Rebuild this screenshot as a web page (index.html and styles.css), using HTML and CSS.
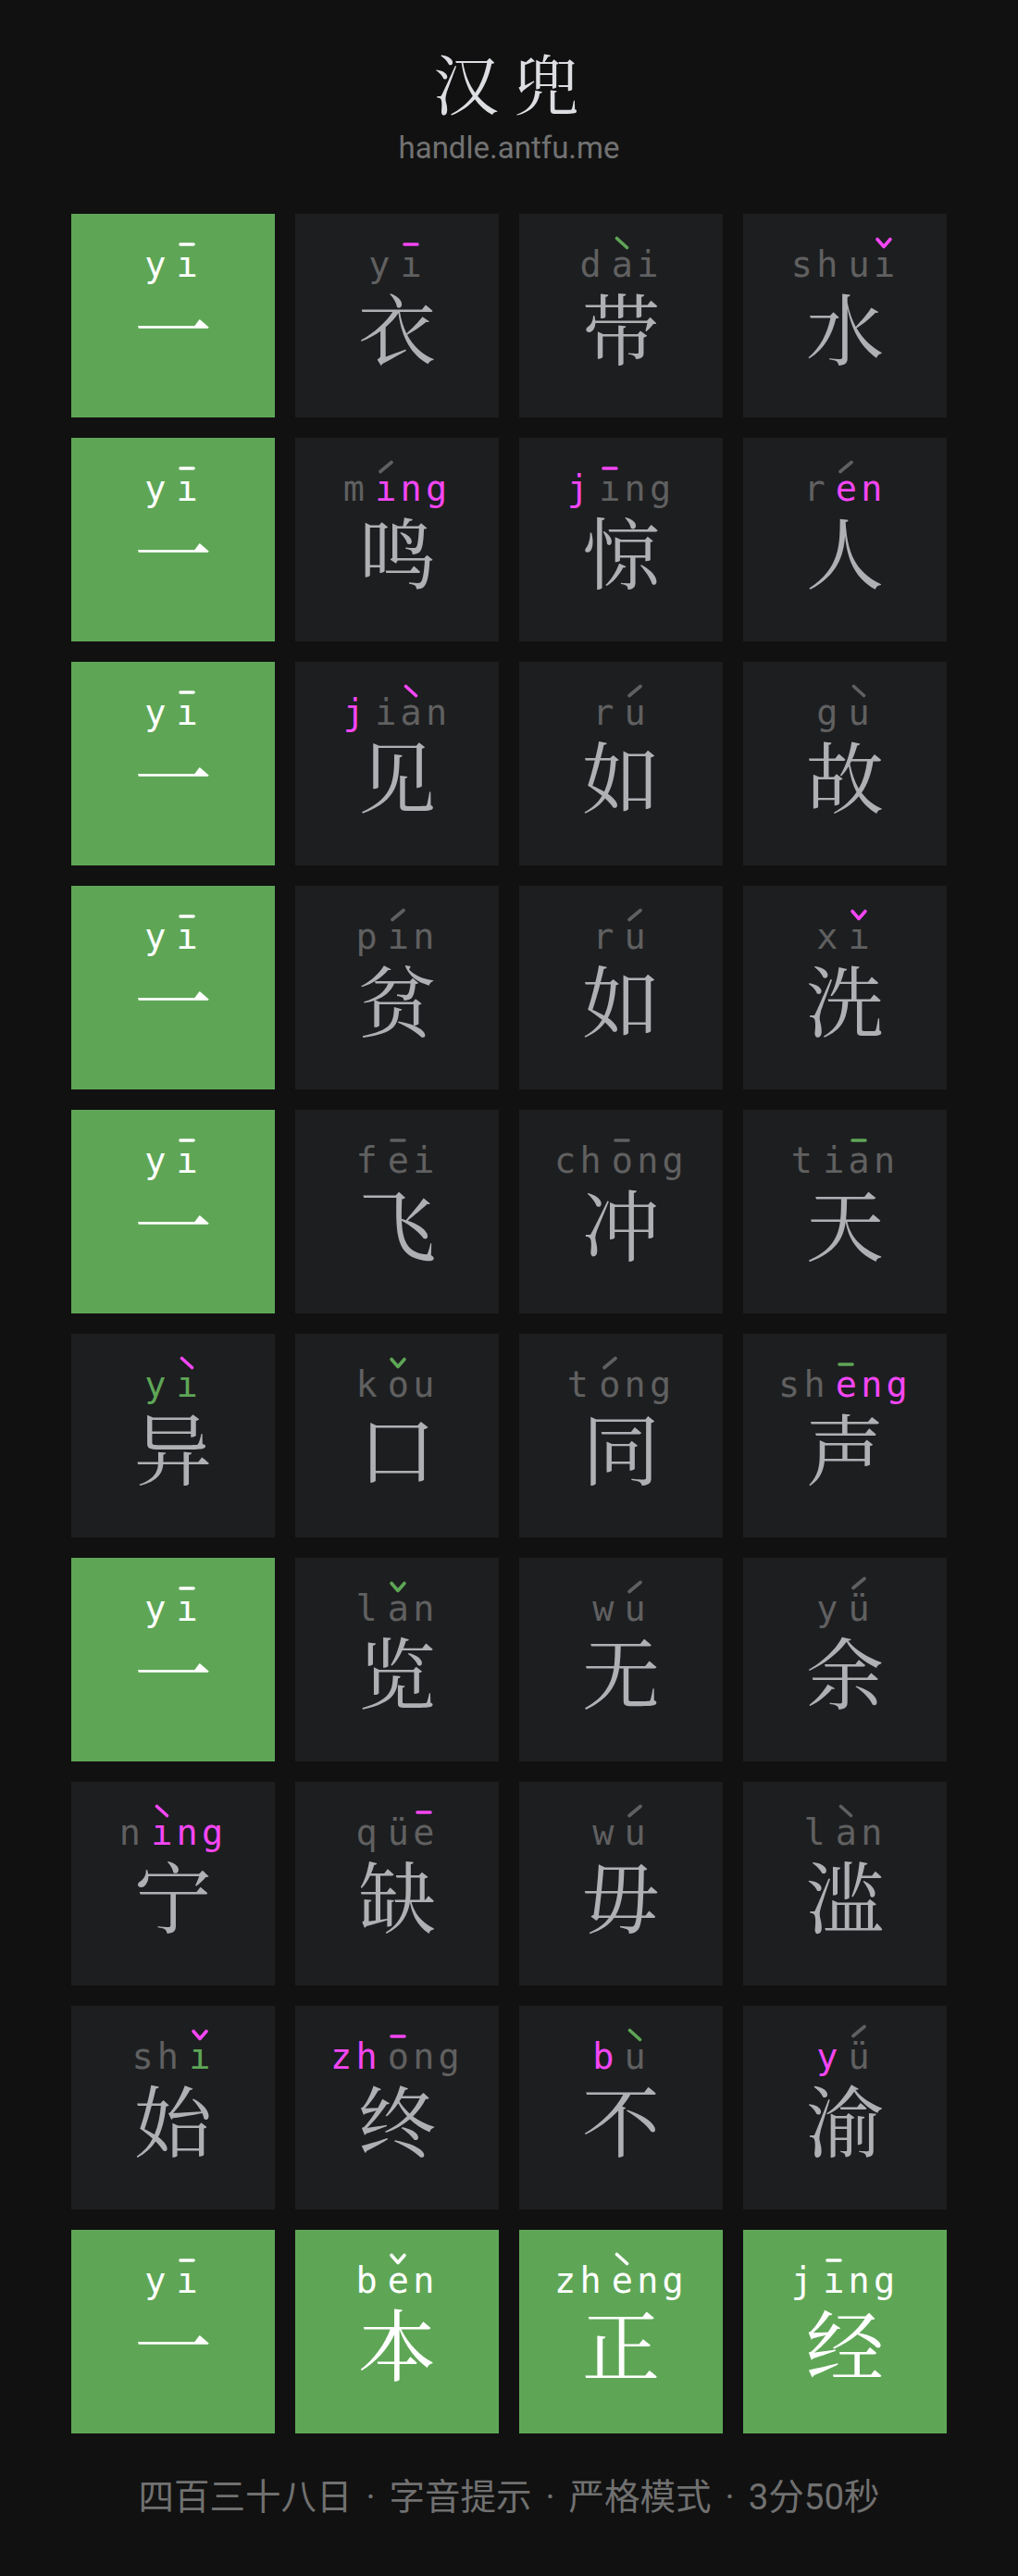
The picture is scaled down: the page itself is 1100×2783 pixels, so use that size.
FILE: index.html
```html
<!DOCTYPE html>
<html lang="zh-CN">
<head>
<meta charset="utf-8">
<title>汉兜</title>
<link rel="stylesheet" href="styles.css">
</head>
<body>
<svg class="defs" width="0" height="0" aria-hidden="true">
  <defs>
    <symbol id="t1" viewBox="0 0 20 16"><path d="M3 9H17"/></symbol>
    <symbol id="t2" viewBox="0 0 20 16"><path d="M4 12.5L16 2.5"/></symbol>
    <symbol id="t3" viewBox="0 0 20 16"><path d="M3 3.5L10 11.5L17 3.5"/></symbol>
    <symbol id="t4" viewBox="0 0 20 16"><path d="M4.5 2.5L15.5 12.5"/></symbol>
  </defs>
</svg>
<main class="page">
  <header class="head">
    <h1 class="title">汉兜</h1>
    <div class="sub">handle.antfu.me</div>
  </header>

  <section class="grid">
    <!-- row 1 -->
    <div class="tile ok"><div class="py"><span class="l">y</span><span class="l f">ı<svg class="tone"><use href="#t1"/></svg></span></div><div class="ch">一</div></div>
    <div class="tile"><div class="py"><span class="l">y</span><span class="l f">ı<svg class="tone m"><use href="#t1"/></svg></span></div><div class="ch">衣</div></div>
    <div class="tile"><div class="py"><span class="l">d</span><span class="l f">a<svg class="tone k"><use href="#t4"/></svg></span><span class="l">i</span></div><div class="ch">带</div></div>
    <div class="tile"><div class="py"><span class="l">s</span><span class="l">h</span><span class="l f">u</span><span class="l">ı<svg class="tone m"><use href="#t3"/></svg></span></div><div class="ch">水</div></div>

    <!-- row 2 -->
    <div class="tile ok"><div class="py"><span class="l">y</span><span class="l f">ı<svg class="tone"><use href="#t1"/></svg></span></div><div class="ch">一</div></div>
    <div class="tile"><div class="py"><span class="l">m</span><span class="l f m">ı<svg class="tone g"><use href="#t2"/></svg></span><span class="l m">n</span><span class="l m">g</span></div><div class="ch">鸣</div></div>
    <div class="tile"><div class="py"><span class="l m">j</span><span class="l f">ı<svg class="tone m"><use href="#t1"/></svg></span><span class="l">n</span><span class="l">g</span></div><div class="ch">惊</div></div>
    <div class="tile"><div class="py"><span class="l">r</span><span class="l f m">e<svg class="tone g"><use href="#t2"/></svg></span><span class="l m">n</span></div><div class="ch">人</div></div>

    <!-- row 3 -->
    <div class="tile ok"><div class="py"><span class="l">y</span><span class="l f">ı<svg class="tone"><use href="#t1"/></svg></span></div><div class="ch">一</div></div>
    <div class="tile"><div class="py"><span class="l m">j</span><span class="l f">i</span><span class="l">a<svg class="tone m"><use href="#t4"/></svg></span><span class="l">n</span></div><div class="ch">见</div></div>
    <div class="tile"><div class="py"><span class="l">r</span><span class="l f">u<svg class="tone"><use href="#t2"/></svg></span></div><div class="ch">如</div></div>
    <div class="tile"><div class="py"><span class="l">g</span><span class="l f">u<svg class="tone"><use href="#t4"/></svg></span></div><div class="ch">故</div></div>

    <!-- row 4 -->
    <div class="tile ok"><div class="py"><span class="l">y</span><span class="l f">ı<svg class="tone"><use href="#t1"/></svg></span></div><div class="ch">一</div></div>
    <div class="tile"><div class="py"><span class="l">p</span><span class="l f">ı<svg class="tone"><use href="#t2"/></svg></span><span class="l">n</span></div><div class="ch">贫</div></div>
    <div class="tile"><div class="py"><span class="l">r</span><span class="l f">u<svg class="tone"><use href="#t2"/></svg></span></div><div class="ch">如</div></div>
    <div class="tile"><div class="py"><span class="l">x</span><span class="l f">ı<svg class="tone m"><use href="#t3"/></svg></span></div><div class="ch">洗</div></div>

    <!-- row 5 -->
    <div class="tile ok"><div class="py"><span class="l">y</span><span class="l f">ı<svg class="tone"><use href="#t1"/></svg></span></div><div class="ch">一</div></div>
    <div class="tile"><div class="py"><span class="l">f</span><span class="l f">e<svg class="tone"><use href="#t1"/></svg></span><span class="l">i</span></div><div class="ch">飞</div></div>
    <div class="tile"><div class="py"><span class="l">c</span><span class="l">h</span><span class="l f">o<svg class="tone"><use href="#t1"/></svg></span><span class="l">n</span><span class="l">g</span></div><div class="ch">冲</div></div>
    <div class="tile"><div class="py"><span class="l">t</span><span class="l f">i</span><span class="l">a<svg class="tone k"><use href="#t1"/></svg></span><span class="l">n</span></div><div class="ch">天</div></div>

    <!-- row 6 -->
    <div class="tile"><div class="py"><span class="l k">y</span><span class="l f k">ı<svg class="tone m"><use href="#t4"/></svg></span></div><div class="ch">异</div></div>
    <div class="tile"><div class="py"><span class="l">k</span><span class="l f">o<svg class="tone k"><use href="#t3"/></svg></span><span class="l">u</span></div><div class="ch">口</div></div>
    <div class="tile"><div class="py"><span class="l">t</span><span class="l f">o<svg class="tone"><use href="#t2"/></svg></span><span class="l">n</span><span class="l">g</span></div><div class="ch">同</div></div>
    <div class="tile"><div class="py"><span class="l">s</span><span class="l">h</span><span class="l f m">e<svg class="tone k"><use href="#t1"/></svg></span><span class="l m">n</span><span class="l m">g</span></div><div class="ch">声</div></div>

    <!-- row 7 -->
    <div class="tile ok"><div class="py"><span class="l">y</span><span class="l f">ı<svg class="tone"><use href="#t1"/></svg></span></div><div class="ch">一</div></div>
    <div class="tile"><div class="py"><span class="l">l</span><span class="l f">a<svg class="tone k"><use href="#t3"/></svg></span><span class="l">n</span></div><div class="ch">览</div></div>
    <div class="tile"><div class="py"><span class="l">w</span><span class="l f">u<svg class="tone"><use href="#t2"/></svg></span></div><div class="ch">无</div></div>
    <div class="tile"><div class="py"><span class="l">y</span><span class="l f">ü<svg class="tone hi"><use href="#t2"/></svg></span></div><div class="ch">余</div></div>

    <!-- row 8 -->
    <div class="tile"><div class="py"><span class="l">n</span><span class="l f m">ı<svg class="tone m"><use href="#t4"/></svg></span><span class="l m">n</span><span class="l m">g</span></div><div class="ch">宁</div></div>
    <div class="tile"><div class="py"><span class="l">q</span><span class="l f">ü</span><span class="l">e<svg class="tone m"><use href="#t1"/></svg></span></div><div class="ch">缺</div></div>
    <div class="tile"><div class="py"><span class="l">w</span><span class="l f">u<svg class="tone"><use href="#t2"/></svg></span></div><div class="ch">毋</div></div>
    <div class="tile"><div class="py"><span class="l">l</span><span class="l f">a<svg class="tone"><use href="#t4"/></svg></span><span class="l">n</span></div><div class="ch">滥</div></div>

    <!-- row 9 -->
    <div class="tile"><div class="py"><span class="l">s</span><span class="l">h</span><span class="l f k">ı<svg class="tone m"><use href="#t3"/></svg></span></div><div class="ch">始</div></div>
    <div class="tile"><div class="py"><span class="l m">z</span><span class="l m">h</span><span class="l f">o<svg class="tone m"><use href="#t1"/></svg></span><span class="l">n</span><span class="l">g</span></div><div class="ch">终</div></div>
    <div class="tile"><div class="py"><span class="l m">b</span><span class="l f">u<svg class="tone k"><use href="#t4"/></svg></span></div><div class="ch">不</div></div>
    <div class="tile"><div class="py"><span class="l m">y</span><span class="l f">ü<svg class="tone hi"><use href="#t2"/></svg></span></div><div class="ch">渝</div></div>

    <!-- row 10 -->
    <div class="tile ok"><div class="py"><span class="l">y</span><span class="l f">ı<svg class="tone"><use href="#t1"/></svg></span></div><div class="ch">一</div></div>
    <div class="tile ok"><div class="py"><span class="l">b</span><span class="l f">e<svg class="tone"><use href="#t3"/></svg></span><span class="l">n</span></div><div class="ch">本</div></div>
    <div class="tile ok"><div class="py"><span class="l">z</span><span class="l">h</span><span class="l f">e<svg class="tone"><use href="#t4"/></svg></span><span class="l">n</span><span class="l">g</span></div><div class="ch">正</div></div>
    <div class="tile ok"><div class="py"><span class="l">j</span><span class="l f">ı<svg class="tone"><use href="#t1"/></svg></span><span class="l">n</span><span class="l">g</span></div><div class="ch">经</div></div>
  </section>

  <footer class="foot">
    <span>四百三十八日</span><span class="sep">·</span><span>字音提示</span><span class="sep">·</span><span>严格模式</span><span class="sep">·</span><span>3分50秒</span>
  </footer>
</main>
</body>
</html>
```

FILE: styles.css
```css
* { box-sizing: border-box; }
html, body { margin: 0; padding: 0; }
body {
  background: #111111;
  color: #d9dbdf;
  font-family: Roboto, "Noto Sans CJK SC", sans-serif;
  min-height: 2783px;
}
.defs { position: absolute; width: 0; height: 0; overflow: hidden; }

.page {
  display: flex;
  flex-direction: column;
  align-items: center;
  padding-top: 46px;
}

.head {
  display: flex;
  flex-direction: column;
  align-items: center;
}
.title {
  margin: 0;
  font-family: "Noto Serif CJK SC", "Noto Serif CJK", serif;
  font-weight: 400;
  font-size: 71px;
  line-height: 82px;
  letter-spacing: 16px;
  padding-left: 10px;
  color: #dcdee2;
}
.sub {
  margin-top: 13px;
  font-family: Roboto, sans-serif;
  font-size: 33px;
  line-height: 38px;
  color: #727272;
}

.grid {
  margin-top: 52px;
  display: grid;
  grid-template-columns: repeat(4, 220px);
  grid-auto-rows: 220px;
  gap: 22px;
}

.tile {
  background: #1d1e20;
  display: flex;
  flex-direction: column;
  align-items: center;
  padding-top: 36px;
  color: #606060;
}
.tile.ok { background: #5ea656; color: #ffffff; }

.py {
  display: flex;
  font-family: "DejaVu Sans Mono", monospace;
  font-size: 38.5px;
  line-height: 38.5px;
  height: 38.5px;
}
.l { position: relative; margin-right: 4.2px; }
.l.f { margin-left: 7px; }
.m { color: #f446f4; }
.k { color: #5ea656; }
.g { color: #606060; }

.tone {
  position: absolute;
  width: 20px;
  height: 16px;
  left: 50%;
  margin-left: -10px;
  top: -12px;
  fill: none;
  stroke: currentColor;
  stroke-width: 3.6;
  stroke-linecap: round;
  stroke-linejoin: round;
  overflow: visible;
}
.tone.hi { top: -16px; }

.ch {
  margin-top: 4px;
  font-family: "Noto Serif CJK SC", "Noto Serif CJK", serif;
  font-size: 84px;
  line-height: 84px;
  color: #aeb0b4;
}
.tile.ok .ch { color: #ffffff; }

.foot {
  margin-top: 41px;
  display: flex;
  font-family: Roboto, "Noto Sans CJK SC", sans-serif;
  font-size: 38.5px;
  line-height: 56px;
  color: #707070;
}
.sep { margin: 0 15px; }
```
